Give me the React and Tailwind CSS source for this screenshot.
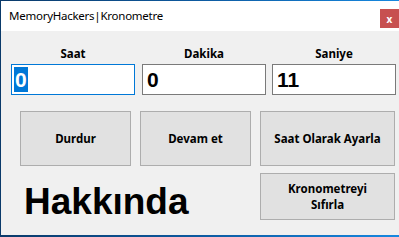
export default function App() {
  const ui = { fontFamily: '"Noto Sans", "Open Sans", sans-serif' };
  const arial = { fontFamily: '"Liberation Sans", sans-serif' };
  return (
    <div className="w-[399px] h-[237px] bg-gradient-to-r from-[#0a3a6a] via-[#0d5aa0] to-[#1688e0] overflow-hidden pt-[1px] pl-[1px]" style={ui}>
      <div className="flex flex-col w-[398px] h-[234px] bg-[#f0f0f0]">
        <div className="h-[30px] bg-white flex items-start shrink-0">
          <div className="pl-[8px] pt-[7px] text-[11.5px] leading-[16px] text-black tracking-[-0.25px]">MemoryHackers|Kronometre</div>
          <div className="ml-auto mt-[8px] w-[19px] h-[19px] bg-[#c75050] flex items-center justify-center text-white text-[10px] font-bold leading-none">x</div>
        </div>
        <div className="flex flex-col pl-[10px]">
          <div className="flex mt-[14px] h-[17px] text-[11.5px] font-bold text-black leading-[17px]">
            <div className="w-[124px] text-center">Saat</div>
            <div className="w-[124px] ml-[7px] text-center">Dakika</div>
            <div className="w-[124px] ml-[6px] text-center">Saniye</div>
          </div>
          <div className="flex mt-[2px] h-[31px]">
            <div className="w-[124px] h-[31px] border border-[#0078d7] bg-white flex items-center pl-[2px]">
              <span className="bg-[#0078d7] text-white text-[21px] font-bold leading-[25px] px-[1px]" style={arial}>0</span>
            </div>
            <div className="w-[124px] ml-[7px] h-[31px] border border-[#7a7a7a] bg-white flex items-center pl-[4px]">
              <span className="text-black text-[21px] font-bold leading-[25px]" style={arial}>0</span>
            </div>
            <div className="w-[124px] ml-[6px] h-[31px] border border-[#7a7a7a] bg-white flex items-center pl-[4px]">
              <span className="text-black text-[21px] font-bold leading-[25px]" style={arial}>11</span>
            </div>
          </div>
          <div className="flex mt-[16px] pl-[9px] h-[55px] text-[11.5px] font-bold text-black">
            <div className="w-[111px] h-[55px] bg-[#e1e1e1] border border-[#adadad] flex items-center justify-center">Durdur</div>
            <div className="w-[111px] ml-[9px] h-[55px] bg-[#e1e1e1] border border-[#adadad] flex items-center justify-center">Devam et</div>
            <div className="w-[135px] ml-[9px] h-[55px] bg-[#e1e1e1] border border-[#adadad] flex items-center justify-center">Saat Olarak Ayarla</div>
          </div>
          <div className="flex mt-[7px] pl-[13px]">
            <div className="text-[37px] font-bold text-black leading-[40px] mt-[9px]" style={arial}>Hakkında</div>
            <div className="ml-auto mr-[4px] w-[135px] h-[47px] bg-[#e1e1e1] border border-[#adadad] flex flex-col items-center justify-center text-center text-[11.5px] font-bold leading-[16px] text-black">
              <span>Kronometreyi</span>
              <span>Sıfırla</span>
            </div>
          </div>
        </div>
      </div>
    </div>
  );
}
